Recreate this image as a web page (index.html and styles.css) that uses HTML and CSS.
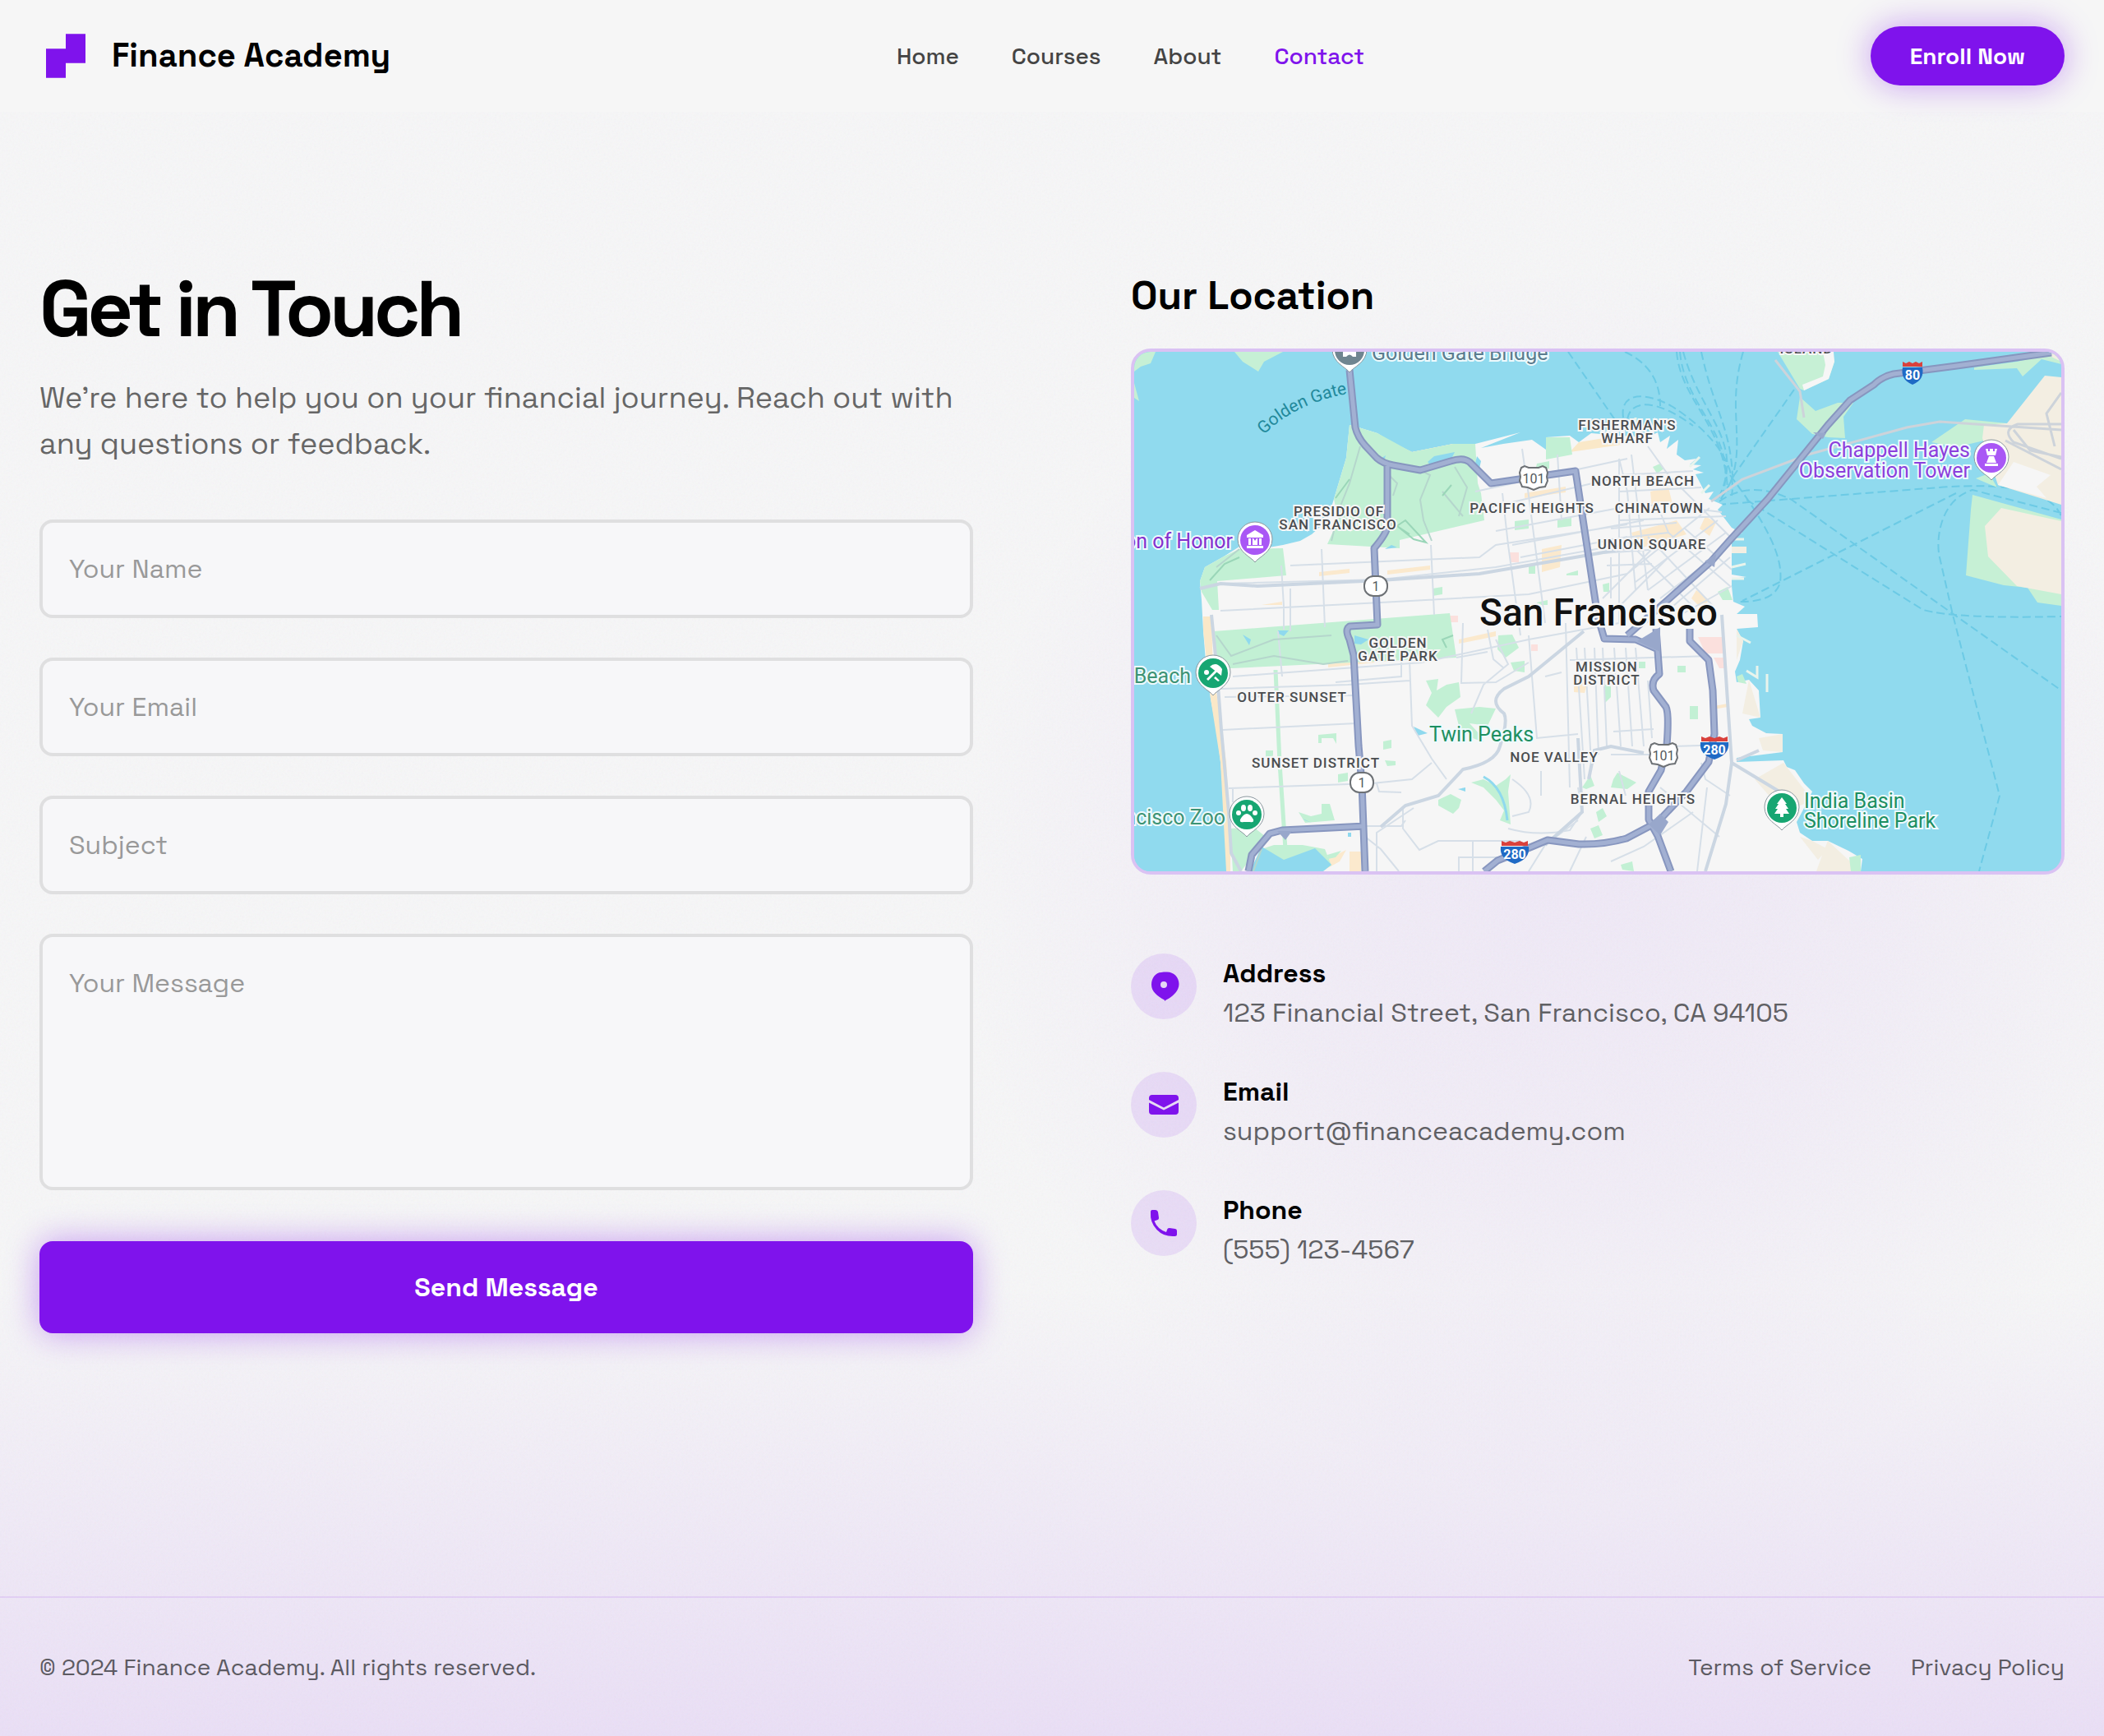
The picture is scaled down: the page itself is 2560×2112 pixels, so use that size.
FILE: index.html
```html
<!DOCTYPE html>
<html lang="en">
<head>
<meta charset="utf-8">
<meta name="viewport" content="width=device-width, initial-scale=1">
<title>Contact - Finance Academy</title>
<link rel="stylesheet" href="styles.css">
</head>
<body>
<div class="page">
  <svg class="grain" aria-hidden="true">
    <filter id="grain"><feTurbulence type="fractalNoise" baseFrequency="0.4" numOctaves="3" stitchTiles="stitch"/></filter>
    <rect width="100%" height="100%" filter="url(#grain)"/>
  </svg>

  <header class="header">
    <a class="brand" href="#">
      <svg class="brand-mark" viewBox="0 0 24 24" aria-hidden="true"><path d="M12 2h9v13.3h-9V22H3V8.7h9z"/></svg>
      <span>Finance Academy</span>
    </a>
    <nav class="nav">
      <a href="#">Home</a>
      <a href="#">Courses</a>
      <a href="#">About</a>
      <a class="active" href="#">Contact</a>
    </nav>
    <button class="enroll" type="button">Enroll Now</button>
  </header>

  <main class="main">
    <section>
      <h1 class="title">Get in Touch</h1>
      <p class="intro">We’re here to help you on your financial journey. Reach out with any questions or feedback.</p>
      <form class="form">
        <input class="field" type="text" placeholder="Your Name" aria-label="Your Name">
        <input class="field" type="email" placeholder="Your Email" aria-label="Your Email">
        <input class="field" type="text" placeholder="Subject" aria-label="Subject">
        <textarea class="field message" placeholder="Your Message" aria-label="Your Message"></textarea>
        <button class="send" type="submit">Send Message</button>
      </form>
    </section>

    <section>
      <h2 class="subtitle">Our Location</h2>
      <div class="map">
        <svg class="map-art" viewBox="0 0 1128 632" preserveAspectRatio="xMidYMid slice" role="img" aria-label="Map of San Francisco">
          <defs>
            <path id="pin" d="M0 27C-4 21-21 15-21-1a21 21 0 0 1 42 0C21 15 4 21 0 27z"/>
            <g id="us101">
              <path d="M-15-13l4-2 5 2h12l5-2 4 2 2 6-1 5 1 5-3 7-7 1-7 3-7-3-7-1-3-7 1-5-1-5z" fill="#fff" stroke="#6d7175" stroke-width="2"/>
              <text class="shield" y="6">101</text>
            </g>
            <g id="ca1">
              <rect x="-14" y="-12" width="28" height="24" rx="11" fill="#fff" stroke="#6d7175" stroke-width="2"/>
              <text class="shield" y="6">1</text>
            </g>
            <path id="golden-gate" d="M158 101Q196 62 264 50"/>
            <path id="highways" d="M262 22L269 92Q272 104 281 114L295 129Q303 136 315 138L348 144L385 133Q400 128 408 134L434 160L537 145L564 322L572 349L610 350L637 362M635 337L639 392Q628 400 632 412L647 432Q651 440 648 479L641 509L626 535V569L637 589L653 632M676 337V352L699 375L704 412L706 465L699 499L672 535L637 572L599 592Q570 600 541 599L503 594L484 602L442 619L426 632M1116 1L1001 17L924 27Q910 30 900 40L871 59L844 89L771 179L725 229L702 255L649 302L600 345M308 139V212Q308 220 292 239L294 285L296 332L262 334Q256 338 262 350L267 369L273 479L277 525L281 632M139 632L143 612L165 586L180 582L281 577"/>
          </defs>
          <rect width="1128" height="632" fill="#90daee"/>

          <!-- ferry routes -->
          <g class="ferry">
            <path d="M528 0L590 90M597 0Q640 20 640 66M660 0C665 60 720 90 722 170M664 0C670 70 735 100 716 175M668 0C690 80 745 110 710 180M690 0C705 70 725 90 728 150M741 0C720 70 745 110 725 160M803 46L730 150Q720 170 712 182"/>
            <path d="M595 80C590 45 630 50 660 70S735 130 727 175M600 82C605 55 640 60 680 90"/>
            <path d="M710 186Q850 175 980 165T1128 200M712 182Q750 155 800 180L1128 412M745 180L960 314Q1000 325 1128 322M1000 172L740 303M1128 196L1020 168C980 180 975 230 980 250L996 320L1053 540L1028 632"/>
            <path d="M725 150C770 210 790 250 786 280Q780 305 735 304"/>
          </g>

          <!-- north and east shores -->
          <g fill="#c6f0d5">
            <path d="M0 0H26L20 14L8 18L0 24zM122 0H181L158 12L151 24L132 12zM0 38L6 60L0 56z"/>
            <path d="M783 0H850L852 12L845 33L815 47L810 45z"/>
            <path d="M810 55L829 72L856 62L875 62L863 79L865 105L844 104L825 100L806 82z"/>
            <path d="M970 110L1011 82L1062 87L1034 108L1000 116zM1022 19L1074 12L1128 0V15L1104 9L1081 30L1074 20L1022 22z"/>
            <path d="M1020 174L1128 204V309L1099 305L1087 287L1058 284L1012 272L1018 192z"/>
            <path d="M1024 154L1040 148L1050 165L1038 160z"/>
          </g>
          <path d="M815 47L845 33L852 12L851 0H838L841 16L838 30L813 40z" fill="#f6f6f6"/>
          <path d="M1108 29L1128 31V186L1051 162L1032 105L1034 89L1062 87zM1055 190L1128 206V295L1074 285L1039 249L1035 212zM1108 2L1128 0V12z" fill="#f3eee2"/>
          <path d="M1051 162L1070 134L1115 150L1098 164L1110 178z" fill="#f6f6f6"/>

          <!-- city -->
          <path fill="#f6f6f6" d="M262 89L258 129L243 179L235 205L216 222L202 230L181 235L158 239L128 237L109 249L86 262L80 279L82 302L84 339L88 389L93 422L101 465L105 499L109 545L112 595L114 632H884L886 617L869 607L844 595H825L810 585L806 572L813 559L825 535L815 525L804 509L794 505L790 497L733 499V494L789 487V465L769 464L752 455L748 447L762 445L761 429L760 412L748 399L733 402L731 389L737 375L741 352L733 337L759 335L758 319H733L743 310L729 304L727 285V276L745 274L727 271V245H745V237H727V222L740 221L727 214L710 192L716 186L699 179L705 170L695 172L683 149L693 147L680 143L690 138L676 137L684 130L670 132L660 125L662 107L648 118L652 102L640 110L637 98L625 104L590 102L556 99L541 110L530 102L501 104V119L484 107L449 112L422 117L470 98L415 112H388L338 122L311 109L296 99L273 92z"/>
          <path fill="#fae8c8" d="M84 322H94L96 389L104 440L112 499L117 580V632H112L105 499L93 422L84 339zM311 109L338 122L388 112L386 118L340 126zM541 110L590 102L600 112L530 122z"/>
          <path fill="#f3eee2" d="M733 375L741 352L733 337V375zM789 465V487L765 485L760 470zM790 500L825 545L815 550L790 560L755 520zM844 595L884 632H830L838 610zM825 595L844 605L832 618L810 590zM748 399L762 445L740 440zM727 245H745V237H727z"/>
          <g fill="#fbe9cd">
            <path d="M225 268L262 264V269L225 273zM308 266L360 260V265L308 271zM475 172L525 164V171L475 178zM628 170L650 165L655 185L630 190zM605 220L660 205L672 222L612 240zM496 240L520 235L518 262L496 268zM395 350L440 340V346L395 355zM695 200L708 208L700 224L688 215zM155 308L180 304V308zM236 380L322 371V375L236 384zM535 405L552 400L548 415L535 414zM705 431L722 428V432L705 435zM262 608H276V632H262zM230 620L258 606L250 620L232 630zM684 290L700 302L690 312L678 300z"/>
          </g>
          <g fill="#fbe0dd">
            <path d="M112 260H135V275H112zM457 244H468V256H457zM686 347H718V367H695zM705 372H720V385H712zM383 321H394V329H383zM483 356H491V364H483z"/>
          </g>

          <!-- parks -->
          <g fill="#c2f0d4">
            <path d="M262 89L273 92L296 99L338 122L388 112H415L418 160L422 172L426 205L323 229V239L235 234L248 205L243 179L258 129z"/>
            <path d="M109 249L128 240L181 239L185 272L101 279L103 314H95L82 292L80 279L86 262z"/>
            <path d="M97 340L384 318L392 372L120 385H100z"/>
            <path d="M501 104H530L533 125L501 131zM463 206L480 204V215L463 217zM515 204L532 202V212L515 214zM490 136L505 133V142L488 145zM480 260H488V270H480zM526 270L540 266V272H526zM363 288L375 286V295L363 297zM570 283L578 281V292H571zM490 305L503 302V308H490z"/>
            <path d="M355 400L370 398L368 412L380 405L395 402L397 420L380 432L370 445L355 430L362 415zM390 435L420 432L440 434L430 455L408 452L420 465L425 475L412 470L395 455zM443 345L460 344L468 360L452 372L442 362zM458 378L475 376V390L462 388z"/>
            <path d="M410 524L425 520L440 528L452 520L458 514L455 535L458 575L445 570L450 558L440 545L425 530zM370 545L385 538L398 545L395 555L388 562L370 552zM200 560L215 565L228 562V550H238L244 570L208 573zM224 466L246 464V477L242 470H228V476H224zM303 474L313 472V482L303 484zM305 497L318 498V503L308 504zM248 514L260 512V522L248 524zM160 485H169V493H160zM235 612L252 607L245 615L236 617z"/>
            <path d="M117 580L145 578L160 590L150 605L139 620L130 632H120zM170 600H205L232 605L240 625L225 632H140L155 605zM583 520L588 512L611 524L600 532L580 530zM661 382H671V390H661zM676 431H686V447H676zM572 405H580V420L572 428zM592 624L606 620L608 632L594 630zM614 377H622V385H614zM631 140L640 136L645 142L636 148zM562 560L570 555L575 565L565 572zM555 580L565 576L570 588L560 592zM545 530L555 515L560 528L550 532zM710 292L722 286L728 302L716 302zM733 395L740 392L745 404L735 402zM870 615L884 612V632H872z"/>
            <path d="M172 387L177 500L184 605" fill="none" stroke="#c2f0d4" stroke-width="5"/>
          </g>
          <g fill="#8fd9ee">
            <path d="M357 134L365 127L390 122L386 130L360 137zM417 127L422 133L420 142L415 136zM132 344L142 350L140 357zM175 339H188L182 346L176 343zM268 345L285 350L276 356L268 355zM340 456L357 464L345 467zM394 532L403 530V535zM143 628L155 602L182 618L220 604L240 624L230 632H143zM205 568L216 573L208 570zM260 585H264V590H260zM300 130L306 126L304 133zM313 235L320 238L305 240z"/>
            <path d="M425 517Q450 530 454 570" fill="none" stroke="#8fd9ee" stroke-width="3"/>
          </g>

          <!-- streets -->
          <g class="street">
            <path d="M103 282L300 277L440 262L590 235M190 260L420 250L440 235L600 210M105 315L300 305L480 295L600 270M190 288V340M228 240L232 335M361 235L365 320M448 172L455 235L470 345M472 118L480 175L500 330M515 125L520 205M182 338V310L179 260M415 170L600 130M430 190L600 150M440 218L590 190M460 235L620 205M470 250L600 225"/>
            <path d="M120 395L350 378L480 350L590 330M105 410L260 405L335 400M108 460L270 452M115 531L290 525L338 520L362 500M335 375L338 455L362 495L380 520M175 340L180 395M120 532V548M110 420L270 418M325 372V395L245 402M400 330L398 403L440 402L480 378M440 350L455 380L425 405L410 440M392 372L430 365M430 338L437 374L450 385M295 525L298 535L325 536"/>
            <path d="M525 330L530 530M538 360L548 520M548 360L556 500M560 360L565 490M570 360L575 480M584 360L592 480M598 360L606 480M610 360L620 480M625 400L630 470M580 490H640M655 480L720 478M480 345L490 470L540 465M530 375L700 370M500 395L520 390M583 462L632 459"/>
            <path d="M281 577H325L330 570M281 590L300 605L322 632M295 632V585L340 555M327 555V580L347 606L370 595L470 595M412 595V632M395 632V615H470M455 580Q490 590 530 582L545 560L540 530M460 520Q490 540 480 560L460 565M480 632L500 600L540 570M530 632L550 590M495 510V540M590 510L598 540M640 530L712 590M690 500L695 520L725 540M697 530L685 632M580 620L620 602L680 560"/>
            <path d="M590 130L600 170L610 290M605 125L625 290M625 115L650 150L700 200L725 225M590 150L680 145M590 170L690 165M590 190L640 186L715 195M590 205L720 200M580 215L660 208M580 228L650 220M570 245L640 240M575 260L630 258M600 270L700 190M610 280L710 205M625 290L720 220M640 300L725 235M600 230L690 320M625 225L705 310M650 220L725 285M670 215L727 265M640 195L650 220M570 300L640 230M580 320L650 250M655 310L725 250M665 320L727 285M580 250V300M590 130V330"/>
          </g>
          <g class="avenue">
            <path d="M80 288L105 282L150 285L300 278L420 270L560 246L620 235M94 320L100 380L106 460L115 560L118 610L130 632M547 340L480 395L450 410Q430 425 450 440Q455 450 445 480Q440 500 400 508L370 540L330 552L300 578M715 320L727 500L720 550L695 632M727 500L785 535M733 497L760 485M553 520L560 485L580 480L620 488M540 470L545 560L500 600"/>
            <path d="M275 115L262 160L250 190L240 230M340 140L360 150L348 180L352 205L362 230M310 150L320 160L315 175M390 140L405 165L395 200M375 170L400 200M128 240L100 262M100 345L118 370L170 350L240 345M120 380L170 370L230 380L260 376M155 605L145 632" class="trail"/>
          </g>
          <path d="M702 182L740 155L820 125L940 92L980 85L1128 95M780 10L810 48L815 80M1128 130L1070 110Q1055 95 1075 88H1128M1128 143L1060 108M1070 95L1090 120L1128 128M1128 50L1110 75L1120 115" fill="none" stroke="#cdd3da" stroke-width="3"/>
          <path d="M315 215L330 205L355 232L340 228L320 212L335 222M245 178L262 155M92 278L110 258L128 250M386 162L375 175M388 345L375 350L380 360" fill="none" stroke="#9ad6b8" stroke-width="2"/>

          <!-- piers -->
          <path d="M727 228H742M727 262L744 258M727 276H742M733 345L750 354M745 388L758 396V382M770 392V414M610 93V80M604 94V82M690 172L700 162M676 140L688 128" fill="none" stroke="#e9f4ec" stroke-width="3"/>

          <!-- highways -->
          <use href="#highways" class="highway-edge"/>
          <use href="#highways" class="highway"/>
          <path d="M174 583L184 594L192 583zM612 352L640 335V365zM626 575L640 562L650 572L640 588zM694 255L708 246L706 262zM826 98L842 99L838 106z" fill="#98a7cb"/>

          <!-- road shields -->
          <use href="#us101" x="486" y="154"/>
          <use href="#us101" x="644" y="491"/>
          <use href="#ca1" x="294" y="285"/>
          <use href="#ca1" x="277" y="524"/>
          <g transform="translate(706 482)"><path d="M-16-14l5 2 5-2 6 2 6-2 5 2 5-2v6h-32z" fill="#d9413c"/><path d="M-17-7h34q2 15-17 21q-19-6-17-21z" fill="#1f6ac5"/><text class="interstate" y="8">280</text></g>
          <g transform="translate(463 609)"><path d="M-16-14l5 2 5-2 6 2 6-2 5 2 5-2v6h-32z" fill="#d9413c"/><path d="M-17-7h34q2 15-17 21q-19-6-17-21z" fill="#1f6ac5"/><text class="interstate" y="8">280</text></g>
          <g transform="translate(947 26)"><path d="M-12-14l4 2 4-2 4 2 4-2 4 2 4-2v6h-24z" fill="#d9413c"/><path d="M-12-7h24q3 15-12 21q-15-6-12-21z" fill="#1f6ac5"/><text class="interstate" y="8">80</text></g>

          <!-- districts -->
          <g class="district">
            <text x="249" y="200">PRESIDIO OF</text><text x="248" y="216">SAN FRANCISCO</text>
            <text x="600" y="95">FISHERMAN'S</text><text x="600" y="111">WHARF</text>
            <text x="619" y="163">NORTH BEACH</text>
            <text x="484" y="196">PACIFIC HEIGHTS</text>
            <text x="639" y="196">CHINATOWN</text>
            <text x="630" y="240">UNION SQUARE</text>
            <text x="321" y="360">GOLDEN</text><text x="321" y="376">GATE PARK</text>
            <text x="575" y="389">MISSION</text><text x="575" y="405">DISTRICT</text>
            <text x="192" y="426">OUTER SUNSET</text>
            <text x="221" y="506">SUNSET DISTRICT</text>
            <text x="511" y="499">NOE VALLEY</text>
            <text x="607" y="550">BERNAL HEIGHTS</text>
            <text x="818" y="2">ISLAND</text>
          </g>
          <text class="city" x="565" y="333">San Francisco</text>

          <!-- places -->
          <g class="place">
            <text x="289" y="10" fill="#5b7c8e">Golden Gate Bridge</text>
            <text x="359" y="474" fill="#1d8f61">Twin Peaks</text>
            <text x="815" y="555" fill="#1d8f61">India Basin</text>
            <text x="815" y="579" fill="#1d8f61">Shoreline Park</text>
            <g text-anchor="end">
              <text x="120" y="239" fill="#8430ce">Legion of Honor</text>
              <text x="69" y="403" fill="#3d9374">Ocean Beach</text>
              <text x="111" y="575" fill="#3d9374">San Francisco Zoo</text>
              <text x="1017" y="128" fill="#8c3fdc">Chappell Hayes</text>
              <text x="1017" y="153" fill="#8c3fdc">Observation Tower</text>
            </g>
          </g>
          <text class="water"><textPath href="#golden-gate">Golden Gate</textPath></text>

          <!-- pins -->
          <g transform="translate(262 -2)"><use href="#pin" class="pin"/><circle r="18" fill="#6f8590"/><path d="M-8 8V2h16v6h-4q-4-5-8 0z" fill="#fff"/></g>
          <g transform="translate(147 229)"><use href="#pin" class="pin"/><circle r="18" fill="#a957f5"/><path d="M0-12l10 6v3h-20v-3zM-8-2h3v8h-3zM5-2h3v8H5zM-3-2h1l2 3 2-3h1v8h-6zM-10 7h20v3h-20z" fill="#fff"/></g>
          <g transform="translate(96 391)"><use href="#pin" class="pin"/><circle r="18" fill="#17a672"/><path d="M-4-8q8-7 15 3l-1 8zM-8 7L4-5l2 2L-6 9zM3 4l5 5-2 1-5-4z" fill="#fff"/><circle cx="-8" cy="-1" r="3" fill="#fff"/></g>
          <g transform="translate(137 563)"><use href="#pin" class="pin"/><circle r="18" fill="#17a672"/><path d="M0-1q4 0 8 7q1 4-4 3h-8q-5 1-4-3q4-7 8-7z" fill="#fff"/><g fill="#fff"><ellipse cx="-4" cy="-8" rx="3" ry="4"/><ellipse cx="4" cy="-8" rx="3" ry="4"/><ellipse cx="-10" cy="-2" rx="3" ry="3"/><ellipse cx="10" cy="-2" rx="3" ry="3"/></g></g>
          <g transform="translate(1043 129)"><use href="#pin" class="pin"/><circle r="18" fill="#a957f5"/><path d="M-7-11h3v3h2v-3h4v3h2v-3h3l-2 8h-10zM-3-2h6l3 8h-12zM-8 7h16v3H-8z" fill="#fff"/></g>
          <g transform="translate(788 555)"><use href="#pin" class="pin"/><circle r="18" fill="#17a672"/><path d="M0-13l6 8H4l4 6H5l4 6H2v4h-4V7h-7l4-6h-3l4-6h-2z" fill="#fff"/></g>
        </svg>
      </div>

      <ul class="contacts">
        <li class="contact">
          <span class="badge"><svg viewBox="0 0 80 80" aria-hidden="true"><path fill-rule="evenodd" d="M43 22.5C52 22 58.500 29 58.500 37c0 8-6 13.500-12 17.500L42 57l-.5 1-.8-1.500C32 52 25 46 25 38c0-8 5-15 12-15 2-.5 4-.5 6-.5zM40 34a4 4 0 1 0 0 8 4 4 0 0 0 0-8z"/></svg></span>
          <div><h3>Address</h3><p>123 Financial Street, San Francisco, CA 94105</p></div>
        </li>
        <li class="contact">
          <span class="badge"><svg viewBox="0 0 80 80" aria-hidden="true"><path d="M26 28h28q4 0 4 4v2L40 43.500 22 34v-2q0-4 4-4zM22 37.500L40 46.500l18-9V48q0 4-4 4H26q-4 0-4-4z"/></svg></span>
          <div><h3>Email</h3><p>support@financeacademy.com</p></div>
        </li>
        <li class="contact">
          <span class="badge"><svg viewBox="0 0 80 80" aria-hidden="true"><path d="M26 24h4q2.500 0 3 2.500l1 7q.2 2-1.500 2.500l-4 1.500Q32 47 43 51l1.500-4q.7-1 2.500-1l7 1q2 .4 2 2.500v4q0 2.500-2.500 2.500Q40 57 31.500 48T24 27q-.2-3 2-3z"/></svg></span>
          <div><h3>Phone</h3><p>(555) 123-4567</p></div>
        </li>
      </ul>
    </section>
  </main>

  <footer class="footer">
    <p>© 2024 Finance Academy. All rights reserved.</p>
    <nav class="legal">
      <a href="#">Terms of Service</a>
      <a href="#">Privacy Policy</a>
    </nav>
  </footer>
</div>
</body>
</html>
```

FILE: styles.css
```css
:root {
  --purple: #7f13ec;
  --glow: 0 0 40px rgba(127, 19, 236, 0.4);
}

* {
  box-sizing: border-box;
  margin: 0;
  padding: 0;
}

body {
  background: #f6f6f7;
  color: #000;
  font-family: "Space Grotesk", Inter, sans-serif;
  font-size: 32px;
  line-height: 48px;
}

a {
  color: inherit;
  text-decoration: none;
}

button,
input,
textarea {
  font: inherit;
}

.page {
  position: relative;
  isolation: isolate;
  display: flex;
  flex-direction: column;
  min-height: 100vh;
  background:
    linear-gradient(to top, rgba(127, 19, 236, 0.1), rgba(127, 19, 236, 0) 26%),
    radial-gradient(circle 760px at 75% 51%, rgba(127, 19, 236, 0.06), rgba(127, 19, 236, 0.04) 50%, rgba(127, 19, 236, 0)),
    #f6f6f7;
}

.grain {
  position: absolute;
  inset: 0;
  z-index: -1;
  width: 100%;
  height: 100%;
  opacity: 0.05;
}

.header {
  display: flex;
  align-items: center;
  justify-content: space-between;
  padding: 32px 48px;
  background: #f6f6f6;
}

.brand {
  display: flex;
  align-items: center;
  gap: 24px;
  font-size: 40px;
  font-weight: 700;
}

.brand-mark {
  width: 64px;
  height: 64px;
  fill: var(--purple);
}

.nav {
  display: flex;
  gap: 64px;
  color: #444;
  font-size: 28px;
  font-weight: 500;
}

.nav .active {
  color: var(--purple);
}

.enroll,
.send {
  border: 0;
  background: var(--purple);
  box-shadow: var(--glow);
  color: #fff;
  font-weight: 700;
}

.enroll {
  padding: 12px 48px;
  border-radius: 36px;
  font-size: 28px;
}

.main {
  display: grid;
  flex: 1;
  grid-template-columns: 1fr 1fr;
  gap: 192px;
  padding: 192px 48px 320px;
}

.title {
  margin-bottom: 32px;
  font-size: 96px;
  font-weight: 700;
  letter-spacing: -5px;
  line-height: 96px;
}

.intro {
  margin-bottom: 64px;
  color: #666;
  font-size: 36px;
  font-weight: 400;
  line-height: 56px;
}

.form {
  display: flex;
  flex-direction: column;
  gap: 48px;
}

.field {
  width: 100%;
  padding: 32px;
  border: 4px solid #dfdfe0;
  border-radius: 16px;
  background: #f7f7f9;
  color: #000;
}

.field::placeholder {
  color: #999;
  opacity: 1;
}

.message {
  height: 312px;
  resize: none;
}

.send {
  margin-top: 14px;
  padding: 32px;
  border-radius: 16px;
}

.subtitle {
  margin-bottom: 32px;
  font-size: 48px;
  font-weight: 700;
  line-height: 64px;
}

.map {
  overflow: hidden;
  height: 640px;
  border: 4px solid #dac2f3;
  border-radius: 24px;
  background: #90daee;
}

.map-art {
  display: block;
  width: 100%;
  height: 100%;
  font-family: Roboto, sans-serif;
}

.ferry path {
  fill: none;
  stroke: #6ccae5;
  stroke-width: 2;
  stroke-dasharray: 10 5;
}

.street path {
  fill: none;
  stroke: #d6dfe8;
  stroke-width: 2;
}

.avenue path {
  fill: none;
  stroke: #cbd6e2;
  stroke-width: 4;
}

.avenue .trail {
  stroke: #b5d6cc;
  stroke-width: 2;
}

.highway-edge {
  fill: none;
  stroke: #8796bf;
  stroke-width: 9;
  stroke-linejoin: round;
}

.highway {
  fill: none;
  stroke: #a2b0d2;
  stroke-width: 5;
}

.shield {
  fill: #55595d;
  font-size: 16px;
  text-anchor: middle;
}

.interstate {
  fill: #fff;
  font-size: 16px;
  font-weight: 700;
  text-anchor: middle;
}

.district {
  fill: #4a4d50;
  stroke: #f6f6f6;
  stroke-width: 4;
  paint-order: stroke;
  font-size: 17px;
  font-weight: 500;
  letter-spacing: 1px;
  text-anchor: middle;
}

.city {
  fill: #111;
  stroke: #f6f6f6;
  stroke-width: 5;
  paint-order: stroke;
  font-size: 46px;
  font-weight: 500;
  text-anchor: middle;
}

.place {
  stroke: #eefafd;
  stroke-width: 4;
  paint-order: stroke;
  font-size: 25px;
}

.water {
  fill: #22899b;
  font-size: 21px;
}

.pin {
  fill: #fff;
  stroke: #8a979e;
  stroke-width: 1;
}

.contacts {
  display: grid;
  gap: 48px;
  margin-top: 96px;
  list-style: none;
}

.contact {
  display: flex;
  gap: 32px;
}

.contact h3 {
  font-size: 32px;
  font-weight: 700;
}

.contact p {
  color: #606064;
}

.badge {
  flex: none;
  width: 80px;
  height: 80px;
  border-radius: 50%;
  background: rgba(127, 19, 236, 0.1);
}

.badge svg {
  display: block;
  fill: var(--purple);
}

.footer {
  display: flex;
  align-items: center;
  justify-content: space-between;
  padding: 64px 48px;
  border-top: 2px solid rgba(127, 19, 236, 0.1);
  color: #5c5a62;
  font-size: 28px;
  line-height: 40px;
}

.legal {
  display: flex;
  gap: 48px;
}
```
